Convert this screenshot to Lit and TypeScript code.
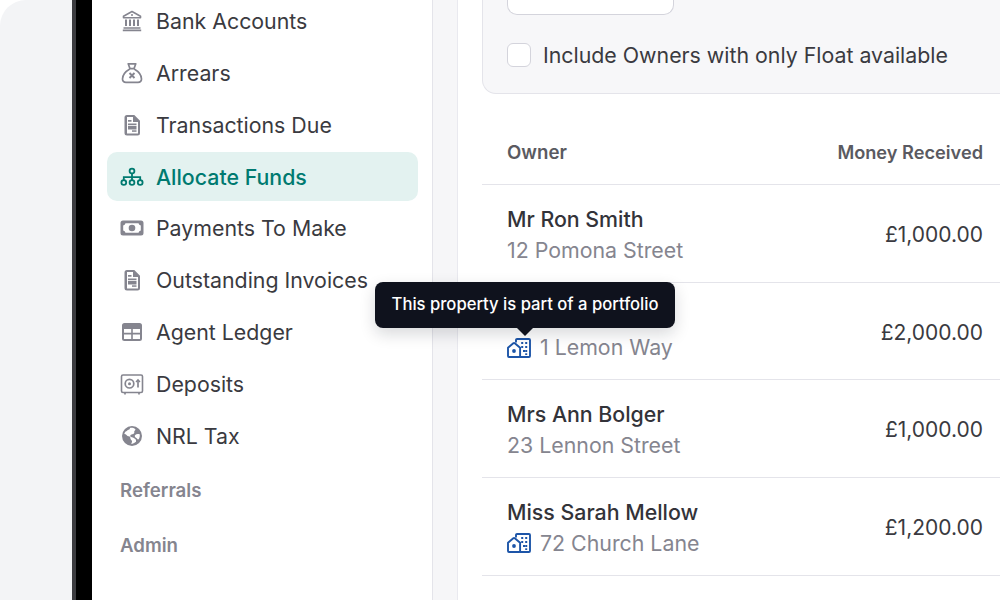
import { LitElement, html, css, svg } from "lit";
import { customElement } from "lit/decorators.js";

const icons: Record<string, unknown> = {
  bank: svg`<path d="M12 2.500 3.500 7.200v1.600h17V7.200L12 2.500Z" fill="none" stroke="currentColor" stroke-width="1.600" stroke-linejoin="round"/><circle cx="12" cy="6" r="1" fill="currentColor"/><path d="M6 10.500v6.500M10 10.500v6.500M14 10.500v6.500M18 10.500v6.500" stroke="currentColor" stroke-width="2"/><path d="M3.500 19h17M2.800 21.400h18.400" stroke="currentColor" stroke-width="1.700"/>`,
  bag: svg`<path d="M8.200 2.800h7.600L14 7.600h-4L8.200 2.800Z" fill="none" stroke="currentColor" stroke-width="1.700" stroke-linejoin="round"/><path d="M9.800 8C5.500 10.500 2.500 14.500 2.500 18c0 2.200 1.500 3.300 3.500 3.300h12c2 0 3.500-1.100 3.500-3.300 0-3.500-3-7.500-7.300-10" fill="none" stroke="currentColor" stroke-width="1.700"/><path d="m9.500 12 5 5m0-5-5 5" stroke="currentColor" stroke-width="1.900"/>`,
  doc: svg`<path fill-rule="evenodd" d="M7 2h7.300L20 7.700V20a2.500 2.500 0 0 1-2.500 2.500h-10.500A2.500 2.500 0 0 1 4.500 20V4.500A2.500 2.500 0 0 1 7 2Zm0 2v16.500h11V9h-5V4H7Z" fill="currentColor"/><rect x="8" y="7" width="3.500" height="1.700" fill="currentColor"/><rect x="8" y="10.500" width="8.500" height="1.700" fill="currentColor"/><rect x="8" y="13" width="8.500" height="3.500" fill="currentColor"/><rect x="12" y="17.300" width="4.500" height="1.500" fill="currentColor"/>`,
  tree: svg`<g fill="none" stroke="currentColor" stroke-width="1.800"><circle cx="12" cy="6" r="2.400"/><circle cx="3.800" cy="17.500" r="2.400"/><circle cx="12" cy="17.500" r="2.400"/><circle cx="20.200" cy="17.500" r="2.400"/><path d="M12 8.500v6.600M3.800 15v-2.800h16.400V15"/></g>`,
  cash: svg`<path fill-rule="evenodd" d="M3 4.500h18A2.500 2.500 0 0 1 23.500 7v10a2.500 2.500 0 0 1-2.500 2.500H3A2.500 2.500 0 0 1 .5 17V7A2.500 2.500 0 0 1 3 4.500Zm2.500 2.700Q5 9.300 3.200 9.500v5q1.800.2 2.300 2.300h13q.5-2.100 2.300-2.300v-5q-1.800-.2-2.300-2.300h-13Z" fill="currentColor"/><circle cx="12" cy="12" r="3.300" fill="currentColor"/>`,
  table: svg`<path fill-rule="evenodd" d="M4.500 3h15A2.500 2.500 0 0 1 22 5.500v13a2.500 2.500 0 0 1-2.500 2.500h-15A2.500 2.500 0 0 1 2 18.500v-13A2.500 2.500 0 0 1 4.500 3ZM4 9v3.800h7.200V9H4Zm8.800 0v3.800H20V9h-7.200ZM4 14.400V19h7.200v-4.600H4Zm8.800 0V19H20v-4.600h-7.200Z" fill="currentColor"/>`,
  safe: svg`<g fill="none" stroke="currentColor"><rect x="1.500" y="3" width="21" height="17.500" rx="1.500" stroke-width="1.600"/><circle cx="9.500" cy="11.700" r="4.300" stroke-width="1.700"/><circle cx="9.500" cy="11.700" r="1.500" fill="currentColor" stroke="none"/><path d="M18 15.500V8.500" stroke-width="1.700"/><path d="M16 10l2-2.200 2 2.200" stroke-width="1.300"/><path d="M5 20.500v2M19 20.500v2" stroke-width="1.700"/></g>`,
  globe: svg`<path fill-rule="evenodd" d="M12 2a10 10 0 1 1 0 20 10 10 0 0 1 0-20ZM4.300 10c1 .1 1.700.4 2.200 1 .6.700 1.400 1.300 2.400 1.300 1 .1 1.500 1 1.500 2 0 1 .7 1.800 1.600 2.500.2.900-.3 2.300-.8 3.200 1.500-.1 3.500-1 4.800-2.200.1-1 .2-2.400-.8-2.900-.8-.4-1.800-1.700-3.300-1.700-1.200 0-2-1-1.500-2 .5-.8 1.700-.9 2.700-1.300.8-.3 1.400-1 1.200-1.700-.3-.8.100-1.400.8-2 .2-.3.400-.7.300-1C13.500 3.700 11.700 3.500 10 3.900c-.2 1-.5 1.600-1.400 1.800-1.200.3-1.900 1.500-3 1.700-.6.600-1 1.500-1.300 2.600ZM15.200 11c-.7.700-.5 2 .4 2.500.7.400 1.500 1 2 1.700.3.400.9.300 1.200-.1.800-1.500 1.200-3.200.9-4.800-1.400-.3-3.200-.6-4.500.7Z" fill="currentColor"/>`,
};

const nav = [
  ["bank", "Bank Accounts"],
  ["bag", "Arrears"],
  ["doc", "Transactions Due"],
  ["tree", "Allocate Funds"],
  ["cash", "Payments To Make"],
  ["doc", "Outstanding Invoices"],
  ["table", "Agent Ledger"],
  ["safe", "Deposits"],
  ["globe", "NRL Tax"],
];

const rows = [
  { name: "Mr Ron Smith", address: "12 Pomona Street", portfolio: false, amount: "£1,000.00" },
  { name: "", address: "1 Lemon Way", portfolio: true, amount: "£2,000.00" },
  { name: "Mrs Ann Bolger", address: "23 Lennon Street", portfolio: false, amount: "£1,000.00" },
  { name: "Miss Sarah Mellow", address: "72 Church Lane", portfolio: true, amount: "£1,200.00" },
];

const portfolioIcon = html`<svg class="pf" viewBox="0 0 24 20" aria-hidden="true"><g fill="none" stroke="currentColor" stroke-width="1.900" stroke-linejoin="round" stroke-linecap="round"><path d="M1 9.800 6.300 5.200a1.200 1.200 0 0 1 1.500 0l5.300 4.600v8.200a1 1 0 0 1-1 1H2a1 1 0 0 1-1-1V9.800Z"/><path d="M9 3.800V2a1 1 0 0 1 1-1h12a1 1 0 0 1 1 1v16a1 1 0 0 1-1 1h-9"/></g><circle cx="7" cy="13" r="1.900" fill="currentColor"/><g fill="currentColor"><rect x="14.200" y="4" width="2" height="2"/><rect x="18.200" y="4" width="2" height="2"/><rect x="14.200" y="8" width="2" height="2"/><rect x="18.200" y="8" width="2" height="2"/><rect x="16" y="12" width="2" height="2"/><rect x="18.200" y="12" width="2" height="2"/><rect x="18.200" y="15.300" width="2" height="1.700"/></g></svg>`;

@customElement("app-root")
export class AppRoot extends LitElement {
  static styles = css`
    :host {
      display: block;
      width: 1000px;
      height: 600px;
      overflow: hidden;
      background: #fff;
      font-family: Inter, "Liberation Sans", sans-serif;
      color: #3a3a40;
    }
    .frame { display: flex; height: 600px; position: relative; }
    .gutter { width: 72px; background: #f3f4f6; border-top-left-radius: 26px; flex: none; }
    .bezel { width: 20px; box-sizing: border-box; background: #000; border-left: 4px solid #3c3c40; flex: none; }
    .sidebar {
      width: 341px; box-sizing: border-box; flex: none; background: #fff;
      border-right: 1.5px solid #e4e4ea; padding: 0 14px 0 15px; overflow: hidden;
    }
    .nav { display: flex; flex-direction: column; gap: 3px; margin-top: -3.6px; }
    .item {
      height: 48.9px; display: flex; align-items: center; gap: 12px; padding-left: 13px;
      border-radius: 10px; font-size: 21.33px; white-space: nowrap;
    }
    .item svg { width: 24px; height: 24px; color: #85858f; flex: none; }
    .item.active { background: #e3f2f0; color: #007a70; font-weight: 450; }
    .item.active svg { color: #007a70; }
    .section { font-size: 18.67px; font-weight: 600; color: #85858f; padding-left: 13px; line-height: 24px; }
    .section.first { margin-top: 18.6px; }
    .section.second { margin-top: 31px; }
    .strip { width: 24px; background: #f6f6f8; flex: none; }
    .main {
      flex: 1; min-width: 0; background: #fff; border-left: 1px solid #e9e9ef; padding-left: 24px;
    }
    .panel {
      height: 94px; box-sizing: border-box; background: #f7f7f9; border: 1.5px solid #e4e4ea; border-top: 0; border-right: 0;
      border-bottom-left-radius: 14px; padding-left: 23.5px; margin-right: -10px;
    }
    .input {
      width: 167px; height: 15px; box-sizing: border-box; background: #fff;
      border: 1.5px solid #d4d4dc; border-top: 0; border-radius: 0 0 10px 10px; margin-bottom: 28px;
    }
    .check { display: flex; align-items: center; gap: 12.5px; font-size: 21.33px; line-height: 24px; }
    .check span:last-child { margin-top: -0.5px; }
    .box { width: 24px; height: 24px; box-sizing: border-box; background: #fff; border: 1.5px solid #d4d4dc; border-radius: 6px; flex: none; }
    .row {
      display: flex; justify-content: space-between; align-items: center; box-sizing: border-box;
      padding: 0 17px 0 25px; border-bottom: 1.5px solid #e4e4ea;
    }
    .head { height: 91px; padding-top: 26px; font-size: 18.67px; font-weight: 600; color: #5a5a61; }
    .head span:last-child { font-size: 18.2px; }
    .body { height: 97.7px; }
    .who { padding-top: 2.4px; }
    .name { font-size: 21.33px; line-height: 31px; font-weight: 450; min-height: 31px; color: #333339; }
    .addr { font-size: 21.33px; line-height: 31px; color: #85858f; display: flex; align-items: center; gap: 9px; }
    .pf { width: 24px; height: 20px; color: #1d55a8; flex: none; }
    .amt { font-size: 21px; margin-top: 2.5px; }
    .tip {
      position: absolute; left: 375px; top: 282px; width: 300px; height: 46px; box-sizing: border-box; padding-bottom: 1.5px; background: #0f121d; color: #fff;
      border-radius: 8px; display: flex; align-items: center; justify-content: center;
      font-size: 16.62px; font-weight: 500; box-shadow: 0 6px 16px rgba(15, 18, 29, 0.16);
    }
    .tip::after {
      content: ""; position: absolute; left: 142px; top: 46px; border: 8px solid transparent;
      border-top-color: #0f121d; border-bottom: 0;
    }
  `;

  render() {
    return html`<div class="frame">
      <div class="gutter"></div>
      <div class="bezel"></div>
      <aside class="sidebar">
        <nav class="nav">
          ${nav.map(
            ([icon, label]) => html`<div class="item ${label === "Allocate Funds" ? "active" : ""}">
              <svg viewBox="0 0 24 24" aria-hidden="true">${icons[icon]}</svg><span>${label}</span>
            </div>`
          )}
        </nav>
        <div class="section first">Referrals</div>
        <div class="section second">Admin</div>
      </aside>
      <div class="strip"></div>
      <main class="main">
        <div class="panel">
          <div class="input"></div>
          <label class="check"><span class="box"></span><span>Include Owners with only Float available</span></label>
        </div>
        <div class="row head"><span>Owner</span><span>Money Received</span></div>
        ${rows.map(
          (r) => html`<div class="row body">
            <div class="who">
              <div class="name">${r.name}</div>
              <div class="addr">${r.portfolio ? portfolioIcon : ""}<span>${r.address}</span></div>
            </div>
            <div class="amt">${r.amount}</div>
          </div>`
        )}
      </main>
      <div class="tip">This property is part of a portfolio</div>
    </div>`;
  }
}
